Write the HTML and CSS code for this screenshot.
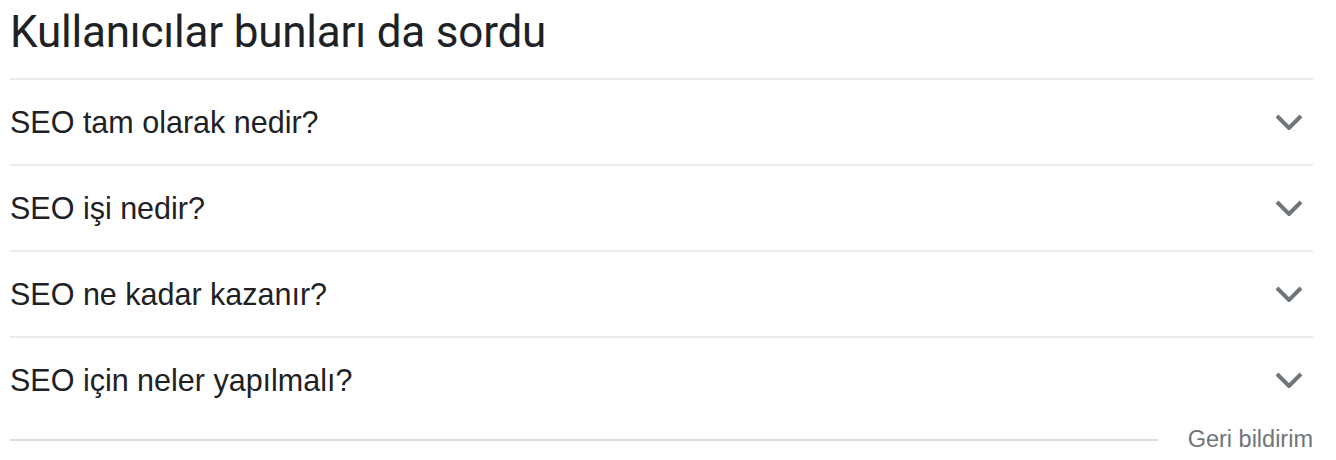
FILE: index.html
```html
<!DOCTYPE html>
<html lang="tr">
<head>
	<meta charset="UTF-8">
	<title>Kullanıcılar bunları da sordu</title>
	<link rel="stylesheet" href="styles.css">
</head>
<body>
	<div class="paa">
		<h2 class="paa-title">Kullanıcılar bunları da sordu</h2>
		<ul class="paa-list">
			<li class="paa-item"><span>SEO tam olarak nedir?</span><svg class="chev" viewBox="0 0 28 16"><path d="M2 2l12 12L26 2"/></svg></li>
			<li class="paa-item"><span>SEO işi nedir?</span><svg class="chev" viewBox="0 0 28 16"><path d="M2 2l12 12L26 2"/></svg></li>
			<li class="paa-item"><span>SEO ne kadar kazanır?</span><svg class="chev" viewBox="0 0 28 16"><path d="M2 2l12 12L26 2"/></svg></li>
			<li class="paa-item"><span>SEO için neler yapılmalı?</span><svg class="chev" viewBox="0 0 28 16"><path d="M2 2l12 12L26 2"/></svg></li>
		</ul>
		<div class="paa-foot">
			<span class="foot-line"></span>
			<a href="javascript:;" class="feedback">Geri bildirim</a>
		</div>
	</div>
</body>
</html>
```
FILE: styles.css
```css
*{margin:0;padding:0;list-style:none;}
body{background:#fff;}
a{text-decoration:none;}
.paa{width:1303px;margin-left:10px;}
.paa-title{font-family:Roboto,"Liberation Sans",sans-serif;font-weight:400;font-size:44px;line-height:64px;height:78px;color:#202124;letter-spacing:-0.2px;}
.paa-item{display:flex;align-items:center;justify-content:space-between;border-top:2px solid #ebebeb;font-family:"Liberation Sans",Arial,sans-serif;font-size:30.5px;color:#202124;box-sizing:border-box;height:86px;}
.chev{width:28px;height:16px;margin-right:10px;fill:none;stroke:#70757a;stroke-width:4;}
.paa-foot{display:flex;align-items:center;margin-top:4px;}
.foot-line{flex:1;height:2px;background:#dadce0;margin-right:30px;}
.feedback{font-family:"Liberation Sans",Arial,sans-serif;font-size:23.5px;color:#70757a;}
```
